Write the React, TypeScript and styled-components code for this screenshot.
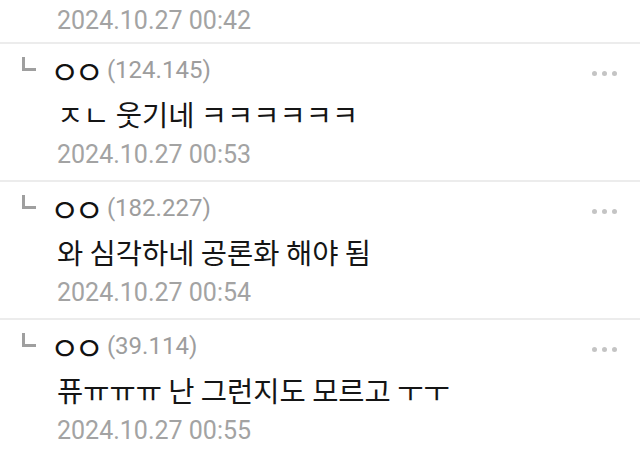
import styled, { createGlobalStyle } from "styled-components";

const Global = createGlobalStyle`
body{
    margin:0;
    background:#fff;
    font-family: Roboto, "Noto Sans CJK KR", sans-serif;
}
`;

const Page = styled.div`
width: 640px;
height: 465px;
overflow: hidden;
background: #fff;
`;

const Tail = styled.div`
height: 42px;
display: flex;
align-items: center;
padding-left: 57px;
padding-bottom: 1px;
box-sizing: border-box;
`;

const Row = styled.div`
border-top: 2px solid #ececec;
height: 138px;
box-sizing: border-box;
display: flex;
padding: 11px 22px 0 22px;
`;

const Corner = styled.svg`
width: 14px;
height: 14px;
margin-top: 2px;
flex-shrink: 0;
`;

const Body = styled.div`
flex: 1;
padding-left: 21px;
display: flex;
flex-direction: column;
`;

const Head = styled.div`
display: flex;
align-items: center;
height: 30px;
`;

const Nick = styled.span`
font-family: "Noto Sans CJK KR", sans-serif;
font-size: 32px;
letter-spacing: -5px;
margin-left: -7px;
color: #111;
line-height: 30px;
`;

const Ip = styled.span`
font-family: Roboto, sans-serif;
font-size: 24px;
color: #9d9d9d;
margin-left: 8px;
`;

const More = styled.div`
margin-left: auto;
margin-top: 6px;
margin-right: 1px;
display: flex;
gap: 5px;
span{
    width: 5px;
    height: 5px;
    border-radius: 50%;
    background: #c4c4c4;
}
`;

const Text = styled.div`
font-family: "Noto Sans CJK KR", sans-serif;
font-size: 28.5px;
color: #151515;
margin-top: 10px;
line-height: 38px;
`;

const Date = styled.div`
font-family: Roboto, sans-serif;
font-size: 25px;
color: #a3a3a3;
margin-top: 4px;
line-height: 36px;
`;

interface Icomment{
    ip:string;
    text:string;
    date:string;
}

const comments:Icomment[] = [
    {ip:"124.145", text:"ㅈㄴ 웃기네 ㅋㅋㅋㅋㅋㅋ", date:"2024.10.27 00:53"},
    {ip:"182.227", text:"와 심각하네 공론화 해야 됨", date:"2024.10.27 00:54"},
    {ip:"39.114", text:"퓨ㅠㅠㅠ 난 그런지도 모르고 ㅜㅜ", date:"2024.10.27 00:55"},
];

function App(){
    return (
        <Page>
            <Global/>
            <Tail>
                <Date style={{marginTop:0}}>2024.10.27 00:42</Date>
            </Tail>
            {comments.map((c)=>
                <Row key={c.date}>
                    <Corner viewBox="0 0 14 14">
                        <path d="M1.5 0 V12.5 H14" fill="none" stroke="#9f9f9f" strokeWidth="3"/>
                    </Corner>
                    <Body>
                        <Head>
                            <Nick>ㅇㅇ</Nick>
                            <Ip>({c.ip})</Ip>
                            <More><span/><span/><span/></More>
                        </Head>
                        <Text>{c.text}</Text>
                        <Date>{c.date}</Date>
                    </Body>
                </Row>
            )}
        </Page>
    );
}

export default App;
